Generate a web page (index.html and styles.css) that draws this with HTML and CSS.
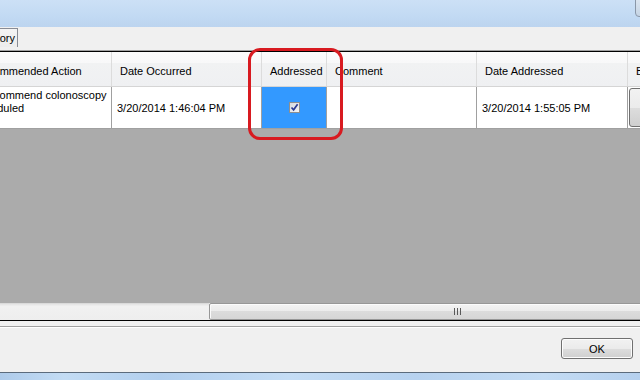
FILE: index.html
```html
<!DOCTYPE html>
<html>
<head>
<meta charset="utf-8">
<link rel="stylesheet" href="styles.css">
</head>
<body>
<div class="window">
  <div class="titlebar"><div class="capbtn"></div></div>
  <div class="tabstrip">
    <div class="tab"><span class="tab-label">History</span></div>
  </div>
  <div class="sep"></div>
  <div class="grid">
    <div class="grid-body">
      <div class="cols header">
        <div class="hcell">Recommended Action</div>
        <div class="hcell">Date Occurred</div>
        <div class="hcell">Addressed</div>
        <div class="hcell">Comment</div>
        <div class="hcell">Date Addressed</div>
        <div class="hcell">By</div>
      </div>
      <div class="cols row">
        <div class="cell wrap"><span class="line">Recommend colonoscopy</span><span class="line second">scheduled</span></div>
        <div class="cell">3/20/2014 1:46:04 PM</div>
        <div class="cell selected">
          <span class="check">
            <svg width="9" height="9" viewBox="0 0 9 9"><path d="M1.5 4.5 L3.6 6.8 L7.6 1.3" fill="none" stroke="#2a3a94" stroke-width="1.7"/></svg>
          </span>
        </div>
        <div class="cell"></div>
        <div class="cell">3/20/2014 1:55:05 PM</div>
        <div class="cell btncell"><span class="rowbtn"></span></div>
      </div>
      <div class="empty"></div>
      <div class="hscroll">
        <div class="track"></div>
        <div class="thumb"><span class="grip"></span></div>
      </div>
    </div>
  </div>
  <div class="gap"></div>
  <div class="panel">
    <button class="okbtn">OK</button>
  </div>
  <div class="bottomline"></div>
  <div class="bottomstrip"></div>
  <div class="highlight"></div>
</div>
</body>
</html>
```

FILE: styles.css
```css
* { box-sizing: border-box; }
html, body { margin: 0; padding: 0; }
body {
  width: 640px;
  height: 380px;
  overflow: hidden;
  font-family: "Liberation Sans", Arial, sans-serif;
  font-size: 11px;
  color: #000;
  background: #f0f0f0;
}
.window {
  position: relative;
  width: 640px;
  height: 380px;
  display: flex;
  flex-direction: column;
  overflow: hidden;
}
.titlebar {
  position: relative;
  height: 27px;
  flex: none;
  background: linear-gradient(to bottom, #cce0f6 0%, #c2daf3 60%, #bcd4ef 100%);
}
.capbtn {
  position: absolute;
  right: -6px;
  top: -4px;
  width: 11px;
  height: 21px;
  border: 1px solid #8a97a8;
  border-radius: 4px;
  background: linear-gradient(to bottom, #dfe8f2, #c5d4e4);
}
.tabstrip {
  height: 23px;
  flex: none;
  background: #f0f0f0;
  display: flex;
  align-items: flex-start;
  overflow: hidden;
}
.tab {
  margin-top: 1px;
  height: 19px;
  width: 18px;
  border-top: 1px solid #898c95;
  border-right: 1px solid #898c95;
  background: linear-gradient(to bottom, #f4f4f4, #ececec);
  overflow: hidden;
  display: flex;
  align-items: center;
  justify-content: flex-end;
  padding-right: 2px;
  white-space: nowrap;
}
.tab-label { line-height: 13px; }
.sep { height: 1px; flex: none; background: #a0a0a0; }
.grid {
  height: 270px;
  flex: none;
  border-top: 1px solid #000;
  border-bottom: 1px solid #000;
  overflow: hidden;
}
.grid-body {
  height: 268px;
  display: flex;
  flex-direction: column;
}
.cols {
  display: grid;
  grid-template-columns: 146px 150px 65px 150px 151px 60px;
  margin-left: -34px;
  width: 722px;
  flex: none;
}
.header {
  height: 35px;
  background: linear-gradient(to bottom, #fbfbfb 0%, #f8f8f9 32%, #f1f2f3 33%, #eff0f2 100%);
  border-bottom: 1px solid #d5d5d5;
}
.hcell {
  border-right: 1px solid #dcdcdc;
  padding: 4px 0 0 8px;
  display: flex;
  align-items: center;
  white-space: nowrap;
  overflow: hidden;
}
.row {
  height: 42px;
  background: #fff;
  border-bottom: 1px solid #a0a0a0;
}
.cell {
  border-right: 1px solid #a0a0a0;
  padding-left: 5px;
  display: flex;
  align-items: center;
  white-space: nowrap;
  overflow: hidden;
}
.cell.wrap {
  flex-direction: column;
  align-items: flex-start;
  padding: 2px 0 0 14px;
  line-height: 13px;
}
.line { display: block; }
.line.second { margin-left: -6px; }
.cell.selected {
  background: #3399ff;
  justify-content: center;
  padding-left: 0;
}
.check {
  width: 11px;
  height: 11px;
  border: 1px solid #8e8f8f;
  background: linear-gradient(135deg, #d6d9de, #f4f5f7);
  display: flex;
  align-items: center;
  justify-content: center;
}
.check svg { display: block; }
.btncell { padding: 1px 0 1px 1px; align-items: stretch; }
.rowbtn {
  flex: 1;
  border: 1px solid #707070;
  border-radius: 3px;
  background: linear-gradient(to bottom, #f2f2f2 0%, #ebebeb 50%, #dddddd 51%, #cfcfcf 100%);
}
.empty { flex: 1; background: #ababab; }
.hscroll {
  height: 17px;
  flex: none;
  display: flex;
  background: #ececec;
}
.track {
  width: 209px;
  background: linear-gradient(to bottom, #e3e3e3 0%, #f1f1f1 15%, #eeeeee 100%);
  border-top: 1px solid #dadada;
}
.thumb {
  flex: 1;
  margin-right: -4px;
  border: 1px solid #979797;
  border-radius: 2px;
  background: linear-gradient(to bottom, #f3f3f3 0%, #ececec 45%, #dcdcdc 50%, #d6d6d6 100%);
  position: relative;
  box-shadow: inset 1px 1px 0 #fbfbfb;
}
.grip {
  position: absolute;
  left: 244px;
  top: 4px;
  width: 7px;
  height: 7px;
  background: linear-gradient(to right, #5a5a5a 0 1px, transparent 1px 3px, #5a5a5a 3px 4px, transparent 4px 6px, #5a5a5a 6px 7px);
}
.gap { height: 5px; flex: none; background: #f0f0f0; }
.panel {
  height: 46px;
  flex: none;
  border-top: 1px solid #a0a0a0;
  box-shadow: inset 0 1px 0 #fff;
  background: #f0f0f0;
  display: flex;
  justify-content: flex-end;
  align-items: flex-start;
  padding: 11px 7px 0 0;
}
.okbtn {
  width: 72px;
  height: 21px;
  border: 1px solid #707070;
  border-radius: 3px;
  background: linear-gradient(to bottom, #f2f2f2 0%, #ebebeb 50%, #dddddd 51%, #cfcfcf 100%);
  font-family: "Liberation Sans", Arial, sans-serif;
  font-size: 11px;
  color: #000;
  padding: 0;
  box-shadow: inset 0 0 0 1px #fcfcfc;
}
.bottomline { height: 1px; flex: none; background: #5b6b7c; }
.bottomstrip {
  height: 7px;
  flex: none;
  background: linear-gradient(to right, #aecbea 0%, #c3dcf4 10%, #b2cfee 25%, #c5ddf5 45%, #b7d2ef 65%, #c4dcf4 85%, #b5d0ee 100%);
}
.highlight {
  position: absolute;
  left: 248px;
  top: 48px;
  width: 95px;
  height: 92px;
  border: 3px solid #d81a20;
  border-radius: 12px;
}
```
